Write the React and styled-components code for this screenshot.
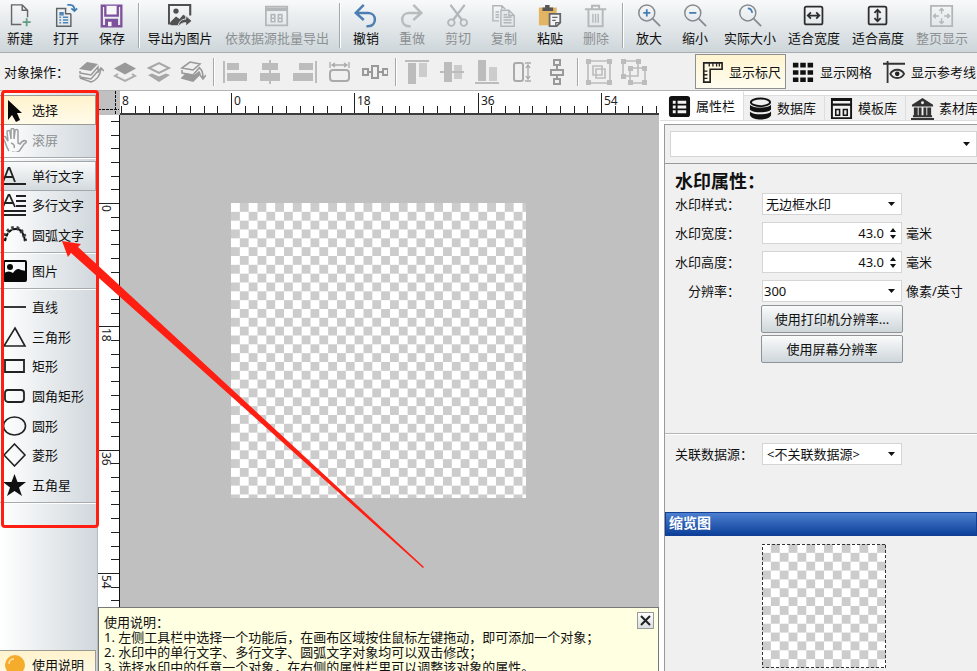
import React, { useEffect, useRef, useState } from "react";
import styled, { createGlobalStyle, css } from "styled-components";

const GlobalStyle = createGlobalStyle`
  * {
    box-sizing: border-box;
  }
  body {
    margin: 0;
    overflow: hidden;
    font-family: "Noto Sans", "Noto Sans CJK SC", sans-serif;
    font-size: 13px;
    line-height: 16px;
    color: #111;
  }
  button, input, select {
    font: inherit;
    color: inherit;
    margin: 0;
    padding: 0;
    border: none;
    background: none;
    border-radius: 0;
  }
  svg {
    display: block;
    flex: none;
  }
`;

// Layout

const Window = styled.div`
  position: relative;
  display: flex;
  flex-direction: column;
  height: 100vh;
  overflow: hidden;
  background: #fff;
`;

const MainToolbar = styled.div`
  display: flex;
  height: 53px;
  margin-left: -3px;
  flex: none;
  overflow: hidden;
  border-bottom: 1px solid #a9adb0;
  background: linear-gradient(#f8f9fa, #ced6da);
`;

const Divider = styled.div`
  flex: none;
  width: 2px;
  height: 45px;
  margin: 3px 2px 0 3px;
  border-left: 1px solid #a4a8aa;
  background: #fff;
`;

const ToolButton = styled.button`
  display: flex;
  flex-direction: column;
  align-items: center;
  flex: none;
  gap: 2px;
  width: ${(props) => props.$width || 46}px;
  padding-top: 4px;
  white-space: nowrap;
  color: ${(props) => (props.disabled ? "#8d9193" : "#111")};
`;

const ObjectToolbar = styled.div`
  display: flex;
  align-items: center;
  flex: none;
  height: 38px;
  padding-left: 4px;
  overflow: hidden;
  border-bottom: 1px solid #b4b4b4;
  background: #f0f0f0;
`;

const ObjectLabel = styled.span`
  flex: none;
  width: 70px;
  white-space: nowrap;
`;

const ObjectButton = styled.button`
  display: flex;
  justify-content: center;
  flex: none;
  width: ${(props) => props.$width}px;
  color: ${(props) => (props.$dark ? "#999" : "#bcbcbc")};
`;

const ObjectDivider = styled(Divider)`
  height: 28px;
  margin: 0 2px 0 3px;
`;

const Toggle = styled.button`
  display: flex;
  align-items: center;
  flex: none;
  gap: 6px;
  height: 35px;
  width: 91px;
  padding-left: 5px;
  white-space: nowrap;
  border: 1px solid transparent;
  ${(props) =>
    props.$active &&
    css`
      border-color: #8f8f8f;
      background: linear-gradient(#fff4d0, #fffdf0);
    `}
`;

const Toggles = styled.div`
  display: flex;
  flex: none;
  margin-left: 44px;
`;

const Body = styled.div`
  display: flex;
  flex: 1;
  min-height: 0;
`;

// Left tools

const Sidebar = styled.div`
  display: flex;
  flex-direction: column;
  flex: none;
  width: 98px;
  padding-top: 4px;
  overflow: hidden;
  border-right: 1px solid #b8bcbe;
  background: linear-gradient(to right, #fff, #d0d7dc);
`;

const ToolGroup = styled.div`
  display: grid;
  grid-auto-rows: 1fr;
  flex: none;
  height: ${(props) => props.$height}px;
`;

const GroupLine = styled.div`
  flex: none;
  height: 2px;
  margin: 2px 0;
  border-top: 1px solid #a6aaac;
  background: #fff;
`;

const SideButton = styled.button`
  display: flex;
  align-items: center;
  gap: 5px;
  width: 96px;
  padding-left: 3px;
  text-align: left;
  white-space: nowrap;
  border: 1px solid transparent;
  border-left: none;
  color: ${(props) => (props.disabled ? "#8d9193" : "#111")};
  ${(props) =>
    props.$look === "active" &&
    css`
      border-color: #9b9b94;
      background: linear-gradient(#fff3cd, #fffbea);
    `}
  ${(props) =>
    props.$look === "hover" &&
    css`
      border-color: #a3a7aa;
      background: linear-gradient(#fafbfb, #d3dade);
    `}
`;

const HelpButton = styled(SideButton)`
  flex: none;
  height: 30px;
  margin: auto 0 -9px;
`;

// Canvas

const Workspace = styled.main`
  display: flex;
  flex-direction: column;
  flex: 1;
  min-width: 0;
`;

const Board = styled.div`
  display: grid;
  grid-template: 24px minmax(0, 1fr) / 22px minmax(0, 1fr);
  flex: 1;
  min-height: 0;
`;

const Corner = styled.svg`
  background: #c0c0c0;
`;

const TopRuler = styled.svg`
  width: 100%;
  height: 24px;
  background: #fff;
  border-bottom: 2px solid #3c3c3c;
`;

const SideRuler = styled.svg`
  width: 22px;
  height: 100%;
  background: #fff;
  border-right: 1px solid #111;
`;

const RulerText = styled.text`
  font-size: 12px;
  fill: #222;
`;

const Canvas = styled.div`
  padding: 88px 111px 0;
  overflow: hidden;
  background: #c0c0c0;
`;

const Hint = styled.section`
  position: relative;
  flex: none;
  height: 64px;
  padding: 7px 5px;
  overflow: hidden;
  border: 1px solid #777;
  border-width: 1px 1px 0;
  background: #ffffe1;
  line-height: 15px;
  white-space: nowrap;
`;

const HintText = styled.p`
  margin: 0;
`;

const CloseButton = styled.button`
  position: absolute;
  top: 4px;
  right: 4px;
  display: grid;
  place-items: center;
  width: 17px;
  height: 17px;
  border: 1px solid #999;
  background: linear-gradient(#fff, #d8dee1);
`;

// Right panel

const Panel = styled.aside`
  display: flex;
  flex-direction: column;
  flex: none;
  width: 318px;
  padding-left: 5px;
  overflow: hidden;
`;

const Tabs = styled.div`
  display: flex;
  align-items: flex-end;
  flex: none;
  height: 30px;
  margin-left: -4px;
`;

const Tab = styled.button`
  display: flex;
  align-items: center;
  flex: none;
  gap: 5px;
  width: ${(props) => (props.$active ? 84 : 81)}px;
  height: ${(props) => (props.$active ? 30 : 26)}px;
  padding-left: ${(props) => (props.$active ? 8 : 5)}px;
  white-space: nowrap;
  border: 1px solid #ddd;
  border-left: none;
  background: ${(props) => (props.$active ? "#fff" : "#f0f0f0")};
  border-top-color: ${(props) => (props.$active ? "#fff" : "#ddd")};
`;

const PanelBody = styled.div`
  display: flex;
  flex-direction: column;
  flex: 1;
  min-height: 0;
  margin-top: 3px;
  border-top: 1px solid #999;
  border-left: 1px solid #999;
  background: #f0f0f0;
`;

const ObjectPicker = styled.div`
  flex: none;
  padding: 6px 0 6px 5px;
  border-bottom: 1px solid #999;
`;

const Properties = styled.form`
  flex: none;
  height: 270px;
  padding: 7px 0 0 10px;
  border-bottom: 1px solid #b5b5b5;
`;

const Title = styled.h2`
  margin: 0 0 1px;
  font-size: 18px;
  line-height: 21px;
`;

const Field = styled.div`
  display: grid;
  grid-template-columns: 87px 140px minmax(0, 1fr);
  align-items: center;
  height: 22px;
  margin-bottom: 7px;
  white-space: nowrap;
`;

const FieldLabel = styled.label`
  width: ${(props) => props.$width || 65}px;
  text-align: right;
`;

const Unit = styled.span`
  padding-left: 4px;
`;

const Box = styled.div`
  position: relative;
  display: flex;
  height: ${(props) => props.$height || 22}px;
  border: 1px solid #d5d5d5;
  background: #fff;
`;

const Select = styled.select`
  appearance: none;
  flex: 1;
  min-width: 0;
  padding: 0 20px 0 ${(props) => props.$pad || 3}px;
`;

const Arrow = styled.svg`
  position: absolute;
  right: 6px;
  top: 50%;
  margin-top: -2px;
  pointer-events: none;
`;

const NumberInput = styled.input`
  flex: 1;
  min-width: 0;
  text-align: right;
`;

const Stepper = styled.div`
  display: grid;
  align-content: center;
  justify-items: center;
  gap: 3px;
  width: 17px;
`;

const StepButton = styled.button`
  display: block;
`;

const Buttons = styled.div`
  display: grid;
  gap: 2px;
  width: 142px;
  margin: -4px 0 0 86px;
`;

const ActionButton = styled.button`
  height: 28px;
  border: 1px solid #8f9395;
  border-radius: 2px;
  background: linear-gradient(#fafbfb, #ced6da);
`;

const DataSource = styled.div`
  flex: none;
  height: 78px;
  padding: 8px 0 0 10px;
  border-top: 1px solid #fff;
`;

const PreviewTitle = styled.h3`
  flex: none;
  height: 24px;
  margin: 0;
  padding-left: 3px;
  font-size: 14px;
  line-height: 20px;
  color: #fff;
  border: 1px solid #123f94;
  background: linear-gradient(#4d80d0, #0c3f99);
`;

const Preview = styled.div`
  padding: 8px 0 0 97px;
`;

// Marks drawn over the window

const Frame = styled.div`
  position: absolute;
  left: 1px;
  top: 90px;
  width: 98px;
  height: 438px;
  border: 3px solid #ff1e12;
  border-radius: 4px;
  pointer-events: none;
`;

const Pointer = styled.svg`
  position: absolute;
  left: 62px;
  top: 240px;
  pointer-events: none;
`;

// Icons

const Icon = ({ children, size = 24, box = "0 0 24 24" }) => (
  <svg
    width={size}
    height={size}
    viewBox={box}
    fill="none"
    stroke="currentColor"
    strokeWidth="2"
    aria-hidden="true"
  >
    {children}
  </svg>
);

const icons = {
  create: (
    <g stroke="#666" strokeWidth="1.6">
      <path d="M14 22H3V0h12l6 6v8M15 0v6h6" />
      <path d="M20 15v9M15.5 19.5h9" stroke="#5f9c80" strokeWidth="2" />
    </g>
  ),
  open: (
    <g stroke="#5c6468" strokeWidth="1.6">
      <path d="M13 4H2v20h16V10M12 4v6h6" />
      <path d="M5 8h5v4H5z" fill="#4f86b8" stroke="none" />
      <path d="M5 14h2M9 14h6M5 17h2M9 17h6M5 20h2M9 20h6" stroke="#4f86b8" />
      <path d="M14 0h3c4 0 5 2 5 6M18.5 4l3.500 3 3-3" stroke="#3f7cb5" strokeWidth="2" />
    </g>
  ),
  save: (
    <g stroke="#7e519c" strokeWidth="2.6">
      <path d="M1 1h22v23H1z" />
      <path d="M5 1v11h14V1" fill="#f7f7f9" />
      <path d="M6 24v-7h12v7" fill="#7e519c" />
      <path d="M8 19h4v5H8z" fill="#f7f7f9" stroke="none" />
    </g>
  ),
  exportImage: (
    <g stroke="#505050">
      <path d="M9 21H0V0h24v12" strokeWidth="2.4" />
      <circle cx="8" cy="7" r="3" fill="#505050" stroke="none" />
      <path d="M2 19l6-6 4 3 4-5 5 3-10 9H2z" fill="#505050" stroke="none" />
      <path d="M10 25c1-6 4-9 9-9v-4l7 6-7 6v-4c-3 0-6 1-9 5z" fill="#505050" stroke="#f0f2f4" strokeWidth="1" />
    </g>
  ),
  exportData: (
    <g stroke="#b4b7b9">
      <path d="M0 2h24v21H0z" />
      <path d="M0 5h24" strokeWidth="4" />
      <path d="M6 11h4v8H6zM6 15h4M14 11h4v8h-4zM14 15h4" strokeWidth="1.8" />
    </g>
  ),
  undo: <path d="M10 0L1 9l9 8M1 9h14c10 0 10 15 0 15h-2" stroke="#4b7eb3" strokeWidth="2.8" />,
  redo: <path d="M14 0l9 9-9 8M23 9H9c-10 0-10 15 0 15h2" stroke="#b9bcbe" strokeWidth="2.8" />,
  cut: (
    <g stroke="#b3b6b8">
      <path d="M4 0l13 17M20 0L7 17" strokeWidth="2.5" />
      <circle cx="5" cy="20" r="3.700" />
      <circle cx="19" cy="20" r="3.700" />
    </g>
  ),
  copy: (
    <g stroke="#b3b6b8" strokeWidth="1.6">
      <path d="M7 18H0V1h10l4 4M10 1v4M3 8h4M3 11h4M3 14h4" />
      <path d="M9 6h9l6 6v12H9z" fill="#e5e8ea" />
      <path d="M18 6v6h6M12 11h4M12 14h9M12 17h9M12 20h9" />
    </g>
  ),
  paste: (
    <g stroke="none">
      <path d="M0 3h20v20H0z" fill="#e3b562" />
      <path d="M4 7V3h3V0h5v3h4v4z" fill="#555" />
      <path d="M12 10h12v10l-4 4h-8z" fill="#f4f5f6" stroke="#666" strokeWidth="2" />
      <path d="M15 14h6M15 17.5h4M24 20h-5v5" stroke="#666" strokeWidth="1.5" />
    </g>
  ),
  remove: (
    <g stroke="#b6b9bb">
      <path d="M0 5h24M4 5v19h16V5M8 5V1h8v4" strokeWidth="2.2" />
      <path d="M9 10v10M12 10v10M15 10v10" strokeWidth="1.6" />
    </g>
  ),
  zoomIn: (
    <g stroke="#858b8f">
      <circle cx="10" cy="9" r="9" strokeWidth="1.7" />
      <path d="M16 15l9 9" />
      <path d="M6 9h8M10 5v8" stroke="#447db5" />
    </g>
  ),
  zoomOut: (
    <g stroke="#858b8f">
      <circle cx="10" cy="9" r="9" strokeWidth="1.7" />
      <path d="M16 15l9 9" />
      <path d="M6 9h8" stroke="#447db5" />
    </g>
  ),
  zoomReal: (
    <g stroke="#858b8f">
      <circle cx="10" cy="9" r="9" strokeWidth="1.7" />
      <path d="M16 15l9 9" />
      <path d="M10 4c3 0 4.500 2 5 5" stroke="#447db5" />
    </g>
  ),
  fitWidth: (
    <g stroke="#2d2d2d">
      <rect x="2" y="2" width="20" height="20" rx="2" />
      <path d="M6 12h12M9 8.500L5.500 12 9 15.500M15 8.500l3.500 3.500-3.500 3.500" />
    </g>
  ),
  fitHeight: (
    <g stroke="#2d2d2d">
      <rect x="2" y="2" width="20" height="20" rx="2" />
      <path d="M12 6v12M8.500 9L12 5.500 15.500 9M8.500 15l3.500 3.500 3.500-3.500" />
    </g>
  ),
  fitPage: (
    <g stroke="#b3b6b8">
      <path d="M0 1h24v23H0z" />
      <path d="M12 4v6M12 15v6M3 12.500h6M15 12.500h6M9.500 6.500L12 4l2.500 2.500M9.500 18.500L12 21l2.500-2.500M5.500 10L3 12.500 5.500 15M18.500 10l2.500 2.500-2.500 2.500" strokeWidth="1.5" />
    </g>
  ),
  toTop: (
    <g stroke="#999">
      <path d="M0 9l8-7 11 2-7 7z" fill="#999" stroke="none" />
      <path d="M1 11l0 2 11 2 7-8v3M1 15v2l11 2 7-8v2M1 18l11 4c6-2 9-6 10-13M19 12l3-4 3 3" strokeWidth="1.5" />
    </g>
  ),
  moveUp: (
    <g>
      <path d="M1 8.500l11-6 11 6-11 6z" fill="#999" stroke="none" />
      <path d="M5 14l-3 2 10 5 10-5-3-2" stroke="#adadad" />
    </g>
  ),
  moveDown: (
    <g>
      <path d="M2 8l10-5 10 5-10 5z" stroke="#a7a7a7" />
      <path d="M1 15l4-1.500 7 3 7-3 4 1.500-11 7z" fill="#a7a7a7" stroke="none" />
    </g>
  ),
  toBottom: (
    <g stroke="#999" strokeWidth="1.6">
      <path d="M1 8l8-6 10 2-7 6zM1 10v3l11 2 7-8" />
      <path d="M1 18l4-4 8 2 5-4 1 2-7 7z" fill="#999" />
      <path d="M18 8c3 1 4 4 4 10M19 15l3 4 3-4" />
    </g>
  ),
  alignLeft: (
    <g fill="currentColor" stroke="none">
      <path d="M0 1h2v22H0zM4 3h12v7H4zM4 13h20v8H4z" />
    </g>
  ),
  alignCenter: (
    <g fill="currentColor" stroke="none">
      <path d="M11 0h2v24h-2zM4 3h16v7H4zM2 13h20v8H2z" />
    </g>
  ),
  alignRight: (
    <g fill="currentColor" stroke="none">
      <path d="M22 1h2v22h-2zM6 3h14v7H6zM0 13h20v8H0z" />
    </g>
  ),
  sameWidth: (
    <g stroke="#aaa">
      <rect x="2" y="10" width="19" height="11" rx="3" />
      <path d="M2 2v6M21 2v6M4 5h15M7 3L4 5l3 2M16 3l3 2-3 2" strokeWidth="1.3" />
    </g>
  ),
  spaceX: <path d="M0 9h5v6H0zM9 6h6v12H9zM20 9h5v6h-5zM5 12h4M15 12h5" />,
  alignTop: (
    <g fill="currentColor" stroke="none">
      <path d="M0 0h24v2H0zM3 3h8v21H3z" />
      <path d="M14 3h8v14h-8z" opacity="0.7" />
    </g>
  ),
  alignMiddle: (
    <g fill="currentColor" stroke="none">
      <path d="M0 11h24v2H0zM4 2h8v20H4z" />
      <path d="M14 5h8v14h-8z" opacity="0.7" />
    </g>
  ),
  alignBottom: (
    <g fill="currentColor" stroke="none">
      <path d="M0 22h24v2H0zM3 0h8v21H3z" />
      <path d="M14 7h8v14h-8z" opacity="0.7" />
    </g>
  ),
  sameHeight: (
    <g stroke="#aaa">
      <rect x="4" y="3" width="9" height="18" rx="2" />
      <path d="M15 3h6M15 21h6M18 5v14M16 8l2-3 2 3M16 16l2 3 2-3" strokeWidth="1.3" />
    </g>
  ),
  spaceY: <path d="M9 0h6v5H9zM6 10h12v5H6zM9 19h6v5H9zM12 5v5M12 15v4" />,
  group: (
    <g>
      <path d="M1 1h22v22H1zM6 6h9v9H6zM9 9h9v9H9z" strokeWidth="1.6" />
      <path d="M-1-1h5v5h-5zM20-1h5v5h-5zM-1 20h5v5h-5zM20 20h5v5h-5z" fill="currentColor" stroke="none" />
    </g>
  ),
  ungroup: (
    <g>
      <path d="M1 1h15v15H1zM8 8h15v15H8z" strokeWidth="1.6" />
      <path d="M-1-1h5v5h-5zM14-1h5v5h-5zM-1 14h5v5h-5zM6 6h5v5H6zM20 6h5v5h-5zM6 20h5v5H6zM20 20h5v5h-5z" fill="currentColor" stroke="none" />
    </g>
  ),
  ruler: (
    <g stroke="#222">
      <path d="M3 2h20v7H10v14H3z" strokeWidth="1.8" />
      <path d="M9 2v4M13 2v4M17 2v4M20 2v4M3 11h4M3 15h4M3 19h4" strokeWidth="1.4" />
    </g>
  ),
  grid: (
    <path d="M1 2h6v5H1zM9 2h6v5H9zM17 2h6v5h-6zM1 10h6v5H1zM9 10h6v5H9zM17 10h6v5h-6zM1 18h6v5H1zM9 18h6v5H9zM17 18h6v5h-6z" fill="#111" stroke="none" />
  ),
  guide: (
    <g stroke="#333">
      <path d="M0 3h24M5 0v24" />
      <path d="M8 14c3-6 12-6 15 0-3 6-12 6-15 0z" />
      <circle cx="15.5" cy="14" r="2.5" fill="#222" stroke="none" />
    </g>
  ),
  cursor: <path d="M5 2v20l4-5 4 7 4-2-3-7h5z" fill="#080808" stroke="none" />,
  hand: (
    <path
      d="M6 23C4 20 3 17 2 14L0 10c0-2 3-2 3 0l2 3L4 4c0-2 3-2 3 0l1 7V2c0-2 3-2 3 0v9l1-8c0-2 3-2 3 0v12l2 1c2-3 4-4 6-3 1 1 0 2-2 3l-4 6c-1 2-5 3-8 2M8 15c3 1 4 3 3 5"
      stroke="#9d9fa1"
      strokeWidth="1.5"
    />
  ),
  lineText: <path d="M0 18L5.500 4h1L12 18M2 13h8M0 20h23" stroke="#222" strokeWidth="1.8" />,
  multiText: <path d="M0 14L5.500 2h1L12 14M2 10h8M13 3h10M13 8h10M13 13h10M0 18h23M0 22h23" stroke="#222" strokeWidth="1.8" />,
  arcText: (
    <g stroke="#444" strokeWidth="4">
      <path d="M1 18Q3 6 11 5t12 13" strokeDasharray="2.500 2.500" />
      <path d="M2 18Q4 7 12 6t10 12" stroke="#111" strokeWidth="2" strokeDasharray="3.500 1.500" />
    </g>
  ),
  image: (
    <g>
      <rect x="1" y="2" width="22" height="20" rx="1" stroke="#080808" />
      <circle cx="7" cy="8" r="3" fill="#080808" stroke="none" />
      <path d="M1 14q5-3 9 0 4-6 8-3l5 1v10H1z" fill="#080808" stroke="none" />
    </g>
  ),
  line: <path d="M0 12h23" stroke="#222" strokeWidth="1.8" />,
  triangle: <path d="M12 3l10 18H1z" stroke="#222" strokeWidth="1.6" />,
  rect: <path d="M2 6h19v12H2z" stroke="#222" strokeWidth="1.8" />,
  roundRect: <rect x="2" y="6" width="19" height="12" rx="3" stroke="#222" strokeWidth="1.8" />,
  ellipse: <ellipse cx="11.5" cy="12" rx="11" ry="9" stroke="#222" strokeWidth="1.6" />,
  diamond: <path d="M11.500 1l10.500 11-10.500 11L1 12z" stroke="#222" strokeWidth="1.6" />,
  star: <path d="M11.500 1l3 8H23l-7 5.500 3 8.500-7.500-5L4 23l3-8.500L0 9h8.500z" fill="#111" stroke="none" />,
  bulb: (
    <g stroke="none">
      <circle cx="12" cy="12" r="10" fill="#f5ac2d" />
      <path d="M8 20h8v6H8z" fill="#e79b20" />
      <path d="M6 11c0-3 2-5 5-5" stroke="#ffe0a0" strokeWidth="1.5" />
    </g>
  ),
  props: (
    <g stroke="none">
      <rect x="1" y="1" width="22" height="22" rx="3" fill="#111" />
      <path d="M5 6h3v3H5zM10 6h9v3h-9zM5 11h3v3H5zM10 11h9v3h-9zM5 16h3v3H5zM10 16h9v3h-9z" fill="#f4f4f4" />
    </g>
  ),
  database: (
    <g stroke="#111">
      <ellipse cx="12" cy="5.500" rx="10" ry="4" />
      <path d="M1 8c3 4 19 4 22 0v5c-3 4-19 4-22 0zM1 15c3 4 19 4 22 0v4c-3 6-19 6-22 0z" fill="#111" stroke="none" />
    </g>
  ),
  template: (
    <g stroke="#151515">
      <path d="M2 2h20v20H2z" />
      <path d="M2 3h20M2 8h20" strokeWidth="2.5" />
      <path d="M6 13h4v6H6zM14 13h4v6h-4z" strokeWidth="1.6" />
    </g>
  ),
  library: (
    <g fill="#333" stroke="none">
      <path d="M1 8L12 1l11 7v2H1zM3 11h4v8H3zM8 11h3v8H8zM13 11h3v8h-3zM17 11h4v8h-4zM2 19h20v2H2zM0 22h24v2H0z" />
      <circle cx="12" cy="6" r="1.5" fill="#f0f0f0" />
    </g>
  ),
};

const DropArrow = () => (
  <Arrow width="7" height="4" viewBox="0 0 7 4" aria-hidden="true">
    <path d="M0 0h7L3.500 4z" fill="#111" />
  </Arrow>
);

// Transparency squares, `cells` of them along each side
const Checker = ({ id, size, cells, dashed }) => (
  <svg width={size} height={size} viewBox={`0 0 ${cells} ${cells}`} role="img" aria-label={id}>
    <defs>
      <pattern id={id} width="2" height="2" patternUnits="userSpaceOnUse">
        <path d="M0 0h2v2H0z" fill="#fff" />
        <path d="M1 0h1v1H1zM0 1h1v1H0z" fill="#ccc" />
      </pattern>
    </defs>
    <rect width={cells} height={cells} fill={`url(#${id})`} />
    {dashed && (
      <rect
        width={cells}
        height={cells}
        fill="none"
        stroke="#333"
        strokeWidth="2"
        strokeDasharray="3 2"
        vectorEffect="non-scaling-stroke"
      />
    )}
  </svg>
);

// Rulers: a long tick every 18 units, a short one every 2

const UNIT = 123.3 / 18;

const ticksFrom = (zero, length) => {
  const ticks = [];
  for (let value = -16; zero + value * UNIT < length; value += 2) {
    const at = Math.round(zero + value * UNIT);
    if (at >= 0) ticks.push({ value, at, major: value % 18 === 0 });
  }
  return ticks;
};

const useLength = (side) => {
  const ref = useRef(null);
  const [length, setLength] = useState(0);
  useEffect(() => {
    const observer = new ResizeObserver(([entry]) => setLength(entry.contentRect[side]));
    observer.observe(ref.current);
    return () => observer.disconnect();
  }, [side]);
  return [ref, length];
};

const HorizontalRuler = () => {
  const [ref, length] = useLength("width");
  return (
    <TopRuler ref={ref} aria-label="水平标尺">
      <RulerText x="2" y="14">8</RulerText>
      {ticksFrom(111, length).map(({ value, at, major }) => (
        <g key={value}>
          <path d={`M${at}.5 ${major ? 2 : 15}V22`} stroke="#222" />
          {major && <RulerText x={at + 3} y="14">{value}</RulerText>}
        </g>
      ))}
    </TopRuler>
  );
};

const VerticalRuler = () => {
  const [ref, length] = useLength("height");
  return (
    <SideRuler ref={ref} aria-label="垂直标尺">
      {ticksFrom(88, length).map(({ value, at, major }) => (
        <g key={value}>
          <path d={`M${major ? 0 : 13} ${at}.5H21`} stroke="#222" />
          {major && (
            <RulerText transform={`translate(4 ${at + 2}) rotate(90)`}>{value}</RulerText>
          )}
        </g>
      ))}
    </SideRuler>
  );
};

const mainTools = [
  [
    { icon: "create", label: "新建" },
    { icon: "open", label: "打开" },
    { icon: "save", label: "保存" },
  ],
  [
    { icon: "exportImage", label: "导出为图片", width: 76 },
    { icon: "exportData", label: "依数据源批量导出", width: 118, disabled: true },
  ],
  [
    { icon: "undo", label: "撤销" },
    { icon: "redo", label: "重做", disabled: true },
    { icon: "cut", label: "剪切", disabled: true },
    { icon: "copy", label: "复制", disabled: true },
    { icon: "paste", label: "粘贴" },
    { icon: "remove", label: "删除", disabled: true },
  ],
  [
    { icon: "zoomIn", label: "放大" },
    { icon: "zoomOut", label: "缩小" },
    { icon: "zoomReal", label: "实际大小", width: 64 },
    { icon: "fitWidth", label: "适合宽度", width: 64 },
    { icon: "fitHeight", label: "适合高度", width: 64 },
    { icon: "fitPage", label: "整页显示", width: 64, disabled: true },
  ],
];

const objectTools = [
  [["toTop", "置顶"], ["moveUp", "上移"], ["moveDown", "下移"], ["toBottom", "置底"]],
  [["alignLeft", "左对齐"], ["alignCenter", "水平居中"], ["alignRight", "右对齐"], ["sameWidth", "等宽"], ["spaceX", "水平等距"]],
  [["alignTop", "顶对齐"], ["alignMiddle", "垂直居中"], ["alignBottom", "底对齐"], ["sameHeight", "等高"], ["spaceY", "垂直等距"]],
  [["group", "组合"], ["ungroup", "取消组合"]],
];

const sideTools = [
  {
    height: 60,
    items: [
      { icon: "cursor", label: "选择", look: "active" },
      { icon: "hand", label: "滚屏", disabled: true },
    ],
  },
  {
    height: 89,
    items: [
      { icon: "lineText", label: "单行文字", look: "hover" },
      { icon: "multiText", label: "多行文字" },
      { icon: "arcText", label: "圆弧文字" },
    ],
  },
  { height: 30, items: [{ icon: "image", label: "图片" }] },
  {
    height: 208,
    items: [
      { icon: "line", label: "直线" },
      { icon: "triangle", label: "三角形" },
      { icon: "rect", label: "矩形" },
      { icon: "roundRect", label: "圆角矩形" },
      { icon: "ellipse", label: "圆形" },
      { icon: "diamond", label: "菱形" },
      { icon: "star", label: "五角星" },
    ],
  },
];

const tabs = [
  { icon: "props", label: "属性栏" },
  { icon: "database", label: "数据库" },
  { icon: "template", label: "模板库" },
  { icon: "library", label: "素材库" },
];

const SizeField = ({ id, label }) => {
  const [value, setValue] = useState("43.0");
  const step = (by) => setValue((Number(value) + by).toFixed(1));
  return (
    <Field>
      <FieldLabel htmlFor={id}>{label}：</FieldLabel>
      <Box>
        <NumberInput id={id} inputMode="decimal" value={value} onChange={(e) => setValue(e.target.value)} />
        <Stepper>
          <StepButton type="button" aria-label="增加" onClick={() => step(1)}>
            <svg width="6" height="4" viewBox="0 0 6 4"><path d="M0 4h6L3 0z" fill="#111" /></svg>
          </StepButton>
          <StepButton type="button" aria-label="减少" onClick={() => step(-1)}>
            <svg width="6" height="4" viewBox="0 0 6 4"><path d="M0 0h6L3 4z" fill="#111" /></svg>
          </StepButton>
        </Stepper>
      </Box>
      <Unit>毫米</Unit>
    </Field>
  );
};

const SelectField = ({ id, label, option, unit, pad, labelWidth }) => (
  <Field>
    <FieldLabel htmlFor={id} $width={labelWidth}>{label}：</FieldLabel>
    <Box>
      <Select id={id} $pad={pad}>
        <option>{option}</option>
      </Select>
      <DropArrow />
    </Box>
    {unit && <Unit>{unit}</Unit>}
  </Field>
);

const App = () => {
  const [showHint, setShowHint] = useState(true);

  return (
    <Window>
      <GlobalStyle />
      <MainToolbar>
        {mainTools.map((group, i) => (
          <React.Fragment key={i}>
            {i > 0 && <Divider />}
            {group.map((tool) => (
              <ToolButton key={tool.icon} $width={tool.width} disabled={tool.disabled}>
                <Icon box="-1 -1 27 27">{icons[tool.icon]}</Icon>
                {tool.label}
              </ToolButton>
            ))}
          </React.Fragment>
        ))}
      </MainToolbar>

      <ObjectToolbar>
        <ObjectLabel>对象操作：</ObjectLabel>
        {objectTools.map((group, i) => (
          <React.Fragment key={i}>
            {i > 0 && <ObjectDivider />}
            {group.map(([name, label]) => (
              <ObjectButton
                key={name}
                aria-label={label}
                $width={i === 0 ? 34 : 35}
                $dark={name.startsWith("space")}
              >
                <Icon box="-1 -1 26 26" size={26}>{icons[name]}</Icon>
              </ObjectButton>
            ))}
          </React.Fragment>
        ))}
        <Toggles>
          <Toggle $active aria-pressed="true"><Icon size={22}>{icons.ruler}</Icon>显示标尺</Toggle>
          <Toggle aria-pressed="false"><Icon size={22}>{icons.grid}</Icon>显示网格</Toggle>
          <Toggle aria-pressed="false"><Icon size={22}>{icons.guide}</Icon>显示参考线</Toggle>
        </Toggles>
      </ObjectToolbar>

      <Body>
        <Sidebar>
          {sideTools.map(({ height, items }) => (
            <React.Fragment key={height}>
              <ToolGroup $height={height}>
                {items.map((tool) => (
                  <SideButton key={tool.icon} $look={tool.look} disabled={tool.disabled}>
                    <Icon>{icons[tool.icon]}</Icon>
                    {tool.label}
                  </SideButton>
                ))}
              </ToolGroup>
              <GroupLine />
            </React.Fragment>
          ))}
          <HelpButton $look="active" onClick={() => setShowHint(!showHint)}>
            <Icon>{icons.bulb}</Icon>
            使用说明
          </HelpButton>
        </Sidebar>

        <Workspace>
          <Board>
            <Corner width="22" height="24" aria-hidden="true">
              <path d="M0 18.500h21M17.500 0v24" stroke="#111" strokeDasharray="3 1" />
            </Corner>
            <HorizontalRuler />
            <VerticalRuler />
            <Canvas>
              <Checker id="画布" size={295} cells={33.4} />
            </Canvas>
          </Board>
          {showHint && (
            <Hint>
              <HintText>使用说明：</HintText>
              <HintText>1. 左侧工具栏中选择一个功能后，在画布区域按住鼠标左键拖动，即可添加一个对象；</HintText>
              <HintText>2. 水印中的单行文字、多行文字、圆弧文字对象均可以双击修改；</HintText>
              <HintText>3. 选择水印中的任意一个对象，在右侧的属性栏里可以调整该对象的属性。</HintText>
              <CloseButton aria-label="关闭" onClick={() => setShowHint(false)}>
                <svg width="11" height="11" viewBox="0 0 11 11">
                  <path d="M1 1l9 9M10 1l-9 9" stroke="#222" strokeWidth="2" />
                </svg>
              </CloseButton>
            </Hint>
          )}
        </Workspace>

        <Panel>
          <Tabs role="tablist">
            {tabs.map(({ icon, label }, i) => (
              <Tab key={icon} role="tab" $active={i === 0} aria-selected={i === 0}>
                <Icon size={23}>{icons[icon]}</Icon>
                {label}
              </Tab>
            ))}
          </Tabs>
          <PanelBody>
            <ObjectPicker>
              <Box $height={26}>
                <Select aria-label="对象" />
                <DropArrow />
              </Box>
            </ObjectPicker>
            <Properties onSubmit={(e) => e.preventDefault()}>
              <Title>水印属性：</Title>
              <SelectField id="style" label="水印样式" option="无边框水印" />
              <SizeField id="width" label="水印宽度" />
              <SizeField id="height" label="水印高度" />
              <SelectField id="dpi" label="分辨率" option="300" unit="像素/英寸" pad={1} />
              <Buttons>
                <ActionButton type="button">使用打印机分辨率...</ActionButton>
                <ActionButton type="button">使用屏幕分辨率</ActionButton>
              </Buttons>
            </Properties>
            <DataSource>
              <SelectField id="source" label="关联数据源" option="<不关联数据源>" pad={4} labelWidth={78} />
            </DataSource>
            <PreviewTitle>缩览图</PreviewTitle>
            <Preview>
              <Checker id="缩览" size={124} cells={14} dashed />
            </Preview>
          </PanelBody>
        </Panel>
      </Body>

      <Frame />
      <Pointer width="363" height="329" viewBox="0 0 363 329" aria-hidden="true">
        <path d="M0 1l19 3-3 3 346 320-1 1L9 13l-3 4z" fill="#ff1e12" />
      </Pointer>
    </Window>
  );
};

export default App;
